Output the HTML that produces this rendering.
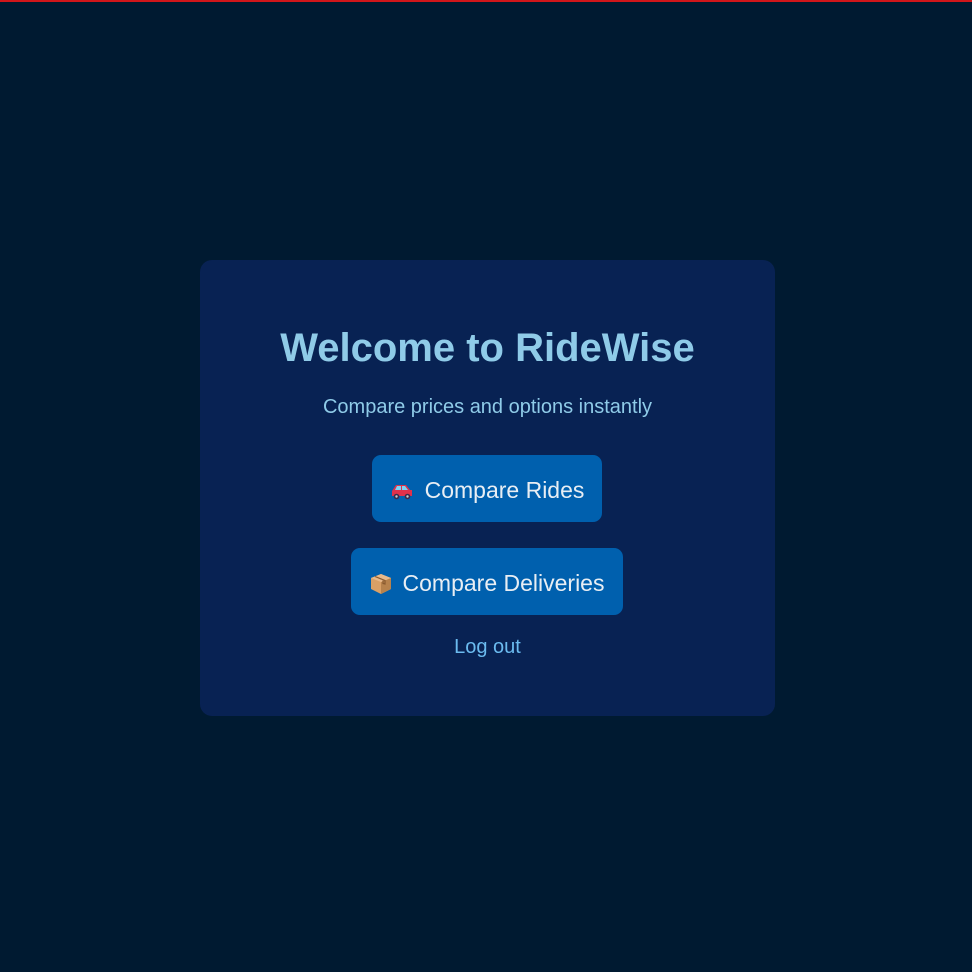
<!DOCTYPE html>
<html><head><meta charset="utf-8"><style>
html,body{margin:0;padding:0;}
body{width:972px;height:972px;background:#001a31;position:relative;overflow:hidden;font-family:"Liberation Sans",Arial,sans-serif;}
.bar{position:absolute;left:0;top:0;width:972px;height:2px;background:#d0161a;}
.card{position:absolute;left:200px;top:260px;width:575px;height:456px;background:#082253;border-radius:12px;text-align:center;}
h1{position:absolute;top:66px;left:0;right:0;margin:0;font-size:40px;font-weight:bold;color:#8fcbe8;line-height:44px;}
.sub{position:absolute;top:135px;left:0;right:0;font-size:20px;color:#8fcbe8;line-height:24px;}
.btn{position:absolute;background:#0060ae;border-radius:9px;color:#e8eef4;font-size:23px;display:flex;align-items:center;justify-content:center;gap:11px;padding-top:4px;box-sizing:border-box;}
.b1{left:172px;top:195px;width:230px;height:67px;}
.b2{left:151px;top:288px;width:272px;height:67px;}
.lo{position:absolute;top:375px;left:0;right:0;font-size:20px;color:#6bbbef;line-height:24px;}
</style></head><body>
<div class="bar"></div>
<div class="card">
<h1>Welcome to RideWise</h1>
<div class="sub">Compare prices and options instantly</div>
<div class="btn b1"><svg width="24" height="18" viewBox="0 0 24 18"><path d="M2 9 L6 3 H16 L20 8 H22 V14 H2 Z" fill="#e0314b"/><path d="M7 4 H11 V8 H5 Z M12 4 H15 L18 8 H12 Z" fill="#7fd3f5"/><circle cx="6.5" cy="14.5" r="2.8" fill="#3a2a4a"/><circle cx="17.5" cy="14.5" r="2.8" fill="#3a2a4a"/><circle cx="6.5" cy="14.5" r="1.2" fill="#ccc"/><circle cx="17.5" cy="14.5" r="1.2" fill="#ccc"/></svg><span>Compare Rides</span></div>
<div class="btn b2"><svg width="22" height="22" viewBox="0 0 22 22"><path d="M11 1 L21 5 V16 L11 21 L1 16 V5 Z" fill="#d9a066"/><path d="M11 9 L21 5 V16 L11 21 Z" fill="#b7824c"/><path d="M1 5 L11 9 L21 5 L11 1 Z" fill="#e8b98a"/><path d="M5 3.5 L15 7.5 V11 L13 10.5 V7.5" fill="none" stroke="#8a5a2e" stroke-width="1.2"/></svg><span>Compare Deliveries</span></div>
<div class="lo">Log out</div>
</div>
</body></html>
